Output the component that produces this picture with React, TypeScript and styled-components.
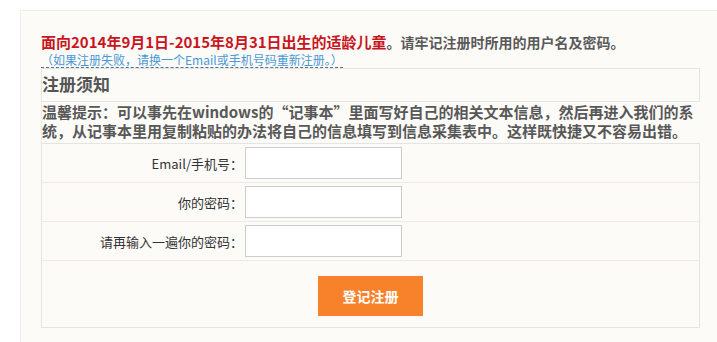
import React from "react";
import styled, { createGlobalStyle } from "styled-components";

const GlobalStyle = createGlobalStyle`
  html, body {
    margin: 0;
    padding: 0;
    background: #ffffff;
  }
  body {
    font-family: "Noto Sans CJK SC", "Noto Sans", "Liberation Sans", sans-serif;
    overflow: hidden;
  }
`;

const Page = styled.div`
  padding: 10px 0 0 20px;
`;

const Panel = styled.div`
  background: #fcfbf8;
  border-top: 1px solid #eeece8;
  border-left: 1px solid #eeece8;
  padding: 22px 0 40px 20px;
  min-height: 340px;
  box-sizing: border-box;
`;

const Title = styled.div`
  font-size: 15px;
  line-height: 18px;
  font-weight: 700;
  white-space: nowrap;
`;

const TitlePart = styled.span<{ $accent?: boolean }>`
  color: ${(p) => (p.$accent ? "#c9161e" : "#5a5a5a")};
  font-size: ${(p) => (p.$accent ? "15px" : "14px")};
`;

const Tip = styled.div`
  display: block;
  width: fit-content;
  margin-top: 2px;
  font-size: 12px;
  line-height: 14px;
  color: #4a98d6;
  border-bottom: 1px dashed #4f6f96;
  white-space: nowrap;
`;

const Notice = styled.div`
  width: 659px;
  box-sizing: border-box;
`;

const NoticeHead = styled.div`
  border: 1px solid #e6e4e0;
  height: 34px;
  padding-bottom: 3px;
  box-sizing: border-box;
  display: flex;
  align-items: center;
  font-size: 17px;
  font-weight: 700;
  color: #555555;
`;

const NoticeText = styled.p`
  margin: 0;
  border-left: 1px solid #eceae6;
  padding: 0 0 3px 0;
  font-size: 15px;
  line-height: 19px;
  font-weight: 700;
  color: #585858;
  width: 659px;
  box-sizing: border-box;
`;

const FormTable = styled.div`
  border: 1px solid #e6e4e0;
  width: 659px;
  box-sizing: border-box;
`;

const Row = styled.div`
  display: grid;
  grid-template-columns: 201px 1fr;
  align-items: center;
  height: 39px;
  box-sizing: border-box;
  border-bottom: 1px solid #eeebe6;
`;

const Label = styled.label`
  text-align: right;
  font-size: 13px;
  color: #333333;
  white-space: nowrap;
`;

const Input = styled.input`
  display: block;
  width: 157px;
  height: 32px;
  box-sizing: border-box;
  border: 1px solid #cccccc;
  background: #ffffff;
  margin: 0 0 0 2px;
  padding: 0 4px;
  outline: none;
`;

const ButtonRow = styled.div`
  display: flex;
  justify-content: center;
  padding: 15px 0 11px;
`;

const SubmitButton = styled.button`
  width: 105px;
  height: 40px;
  border: none;
  background: #f8822c;
  color: #ffffff;
  font-family: "Noto Sans CJK SC", sans-serif;
  font-size: 14px;
  font-weight: 700;
  cursor: pointer;
`;

const fields = [
  { label: "Email/手机号：", type: "text" },
  { label: "你的密码：", type: "password" },
  { label: "请再输入一遍你的密码：", type: "password" },
];

export default function App() {
  return (
    <>
      <GlobalStyle />
      <Page>
        <Panel>
          <Title>
            <TitlePart $accent>面向2014年9月1日-2015年8月31日出生的适龄儿童</TitlePart>
            <TitlePart>。请牢记注册时所用的用户名及密码。</TitlePart>
          </Title>
          <Tip>（如果注册失败，请换一个Email或手机号码重新注册。）</Tip>
          <Notice>
            <NoticeHead>注册须知</NoticeHead>
            <NoticeText>
              温馨提示：可以事先在windows的“记事本”里面写好自己的相关文本信息，然后再进入我们的系统，从记事本里用复制粘贴的办法将自己的信息填写到信息采集表中。这样既快捷又不容易出错。
            </NoticeText>
            <FormTable>
              {fields.map((f) => (
                <Row key={f.label}>
                  <Label>{f.label}</Label>
                  <div>
                    <Input type={f.type} />
                  </div>
                </Row>
              ))}
              <ButtonRow>
                <SubmitButton type="button">登记注册</SubmitButton>
              </ButtonRow>
            </FormTable>
          </Notice>
        </Panel>
      </Page>
    </>
  );
}
